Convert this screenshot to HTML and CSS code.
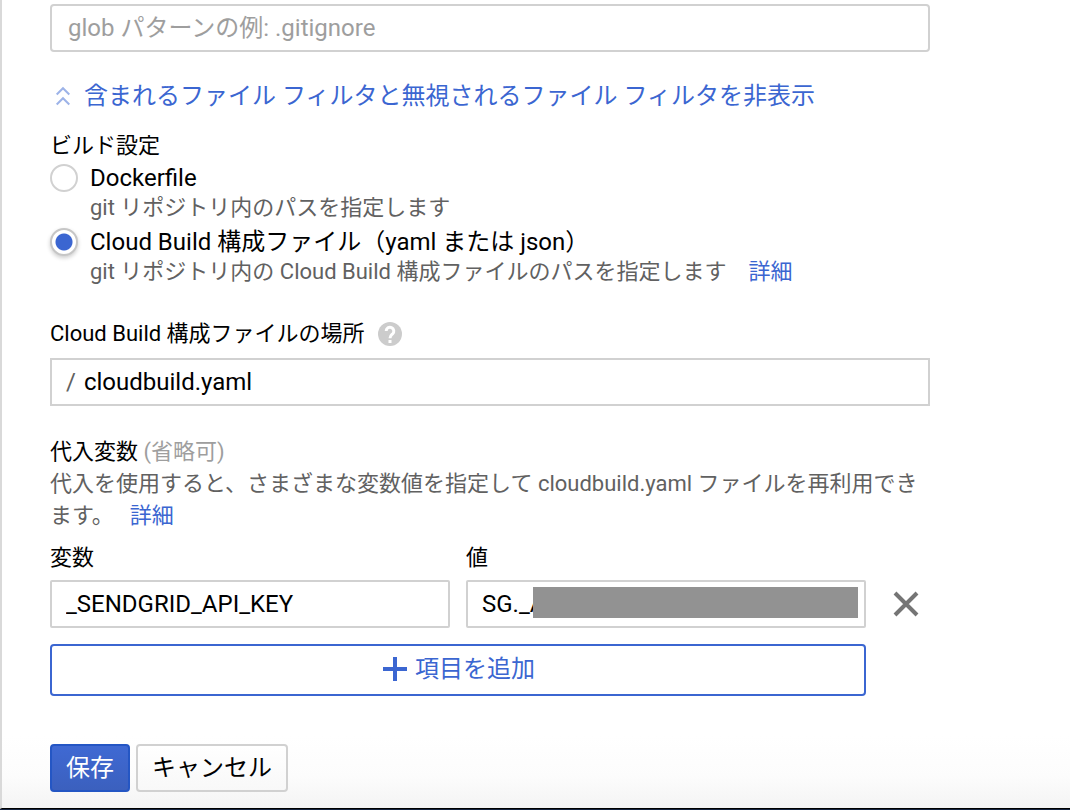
FILE: index.html
```html
<!DOCTYPE html>
<html lang="ja">
<head>
<meta charset="UTF-8">
<meta name="viewport" content="width=device-width, initial-scale=1.0">
<title>トリガーの編集</title>
<link rel="stylesheet" href="styles.css">
</head>
<body>
<main class="panel">
    <form class="form">
        <input class="text-input rounded" type="text" aria-label="無視されるファイル フィルタ" placeholder="glob パターンの例: .gitignore">

        <a class="toggle" href="#">
            <svg class="toggle-icon" viewBox="0 0 16 20" aria-hidden="true">
                <path d="M1.700 8.500 8 2.200l6.300 6.300M1.700 18.500 8 12.200l6.300 6.300"/>
            </svg>
            含まれるファイル フィルタと無視されるファイル フィルタを非表示
        </a>

        <fieldset class="build">
            <legend class="label">ビルド設定</legend>
            <div class="option">
                <input class="radio" type="radio" name="build" id="dockerfile">
                <label class="option-label" for="dockerfile">Dockerfile</label>
                <p class="hint">git リポジトリ内のパスを指定します</p>
            </div>
            <div class="option">
                <input class="radio" type="radio" name="build" id="cloudbuild" checked>
                <label class="option-label" for="cloudbuild">Cloud Build 構成ファイル（yaml または json）</label>
                <p class="hint">git リポジトリ内の Cloud Build 構成ファイルのパスを指定します<a class="link" href="#">詳細</a></p>
            </div>
        </fieldset>

        <div class="location">
            <div class="label-row">
                <label class="label" for="path">Cloud Build 構成ファイルの場所</label>
                <svg class="help" viewBox="0 0 24 24" aria-hidden="true">
                    <circle cx="12" cy="12" r="12"/>
                    <path d="M8.200 9a3.800 3.800 0 1 1 6.400 2.800C13 13.200 12 13.800 12 16.300"/>
                    <rect x="10.500" y="18" width="3" height="3"/>
                </svg>
            </div>
            <div class="prefixed">
                <span class="prefix">/</span>
                <input class="bare-input" type="text" id="path" value="cloudbuild.yaml">
            </div>
        </div>

        <section class="substitutions">
            <h2 class="label">代入変数 <span class="optional">(省略可)</span></h2>
            <p class="description">代入を使用すると、さまざまな変数値を指定して cloudbuild.yaml ファイルを再利用できます。<a class="link" href="#">詳細</a></p>
            <div class="pairs">
                <div class="field">
                    <label class="label" for="key">変数</label>
                    <input class="text-input" type="text" id="key" value="_SENDGRID_API_KEY">
                </div>
                <div class="field">
                    <label class="label" for="value">値</label>
                    <div class="masked">
                        <input class="text-input" type="text" id="value" value="SG._A">
                        <span class="mask"></span>
                    </div>
                </div>
                <button class="remove" type="button" aria-label="削除">
                    <svg class="remove-icon" viewBox="0 0 28 28" aria-hidden="true">
                        <path d="M3 3l22 22M25 3L3 25"/>
                    </svg>
                </button>
                <button class="add" type="button">
                    <svg class="add-icon" viewBox="0 0 24 24" aria-hidden="true">
                        <path d="M12 0v24M0 12h24"/>
                    </svg>
                    項目を追加
                </button>
            </div>
        </section>

        <div class="actions">
            <button class="button primary" type="submit">保存</button>
            <button class="button" type="button">キャンセル</button>
        </div>
    </form>
</main>
</body>
</html>
```
FILE: styles.css
```css
* {
    box-sizing: border-box;
}

body {
    margin: 0;
    background-color: #14233f;
    color: #000;
    font-family: Roboto, "Noto Sans CJK JP", sans-serif;
    font-size: 24px;
    line-height: 32px;
}

input,
button {
    font: inherit;
    color: inherit;
}

h2,
p {
    margin: 0;
}

a {
    color: #3b66d1;
    text-decoration: none;
}

.panel {
    min-height: calc(100vh - 1px);
    padding: 4px 16px 16px 48px;
    border-left: 2px solid #d9d9d9;
    border-bottom: 1px solid #000;
    background: linear-gradient(to top, #f4f4f4, #fcfcfc 32px, #fff 72px);
}

.form {
    max-width: 880px;
}

.text-input {
    display: block;
    width: 100%;
    height: 48px;
    padding: 0 14px;
    border: 2px solid #d1d1d1;
    border-radius: 2px;
    background-color: #fff;
}

.text-input.rounded {
    padding: 0 16px;
    border-radius: 4px;
}

.text-input::placeholder {
    color: #9e9e9e;
    opacity: 1;
}

.toggle {
    display: flex;
    align-items: center;
    gap: 13px;
    margin-top: 28px;
    padding-left: 5px;
}

.toggle-icon {
    width: 16px;
    height: 20px;
    fill: none;
    stroke: #9db3e8;
    stroke-width: 2;
}

.label {
    padding: 0;
    font-size: 22px;
    font-weight: 400;
    line-height: 32px;
}

.build {
    margin: 18px 0 0;
    padding: 0;
    border: 0;
}

.option {
    display: grid;
    grid-template-columns: 28px 1fr;
    column-gap: 12px;
    align-items: center;
    margin-bottom: 4px;
}

.radio {
    appearance: none;
    width: 28px;
    height: 28px;
    margin: 0;
    border: 2px solid #d1d1d1;
    border-radius: 50%;
    background-color: #fff;
}

.radio:checked {
    background-image: radial-gradient(circle, #3b66d1 8px, transparent 9px);
    border-color: #c6c6c6;
    box-shadow: 0 2px 4px rgba(0, 0, 0, 0.2);
}

.hint {
    grid-column: 2;
    color: #616161;
    font-size: 22px;
    line-height: 28px;
}

.link {
    margin-left: 22px;
}

.location {
    margin-top: 28px;
}

.label-row {
    display: flex;
    align-items: center;
    gap: 13px;
    margin-bottom: 8px;
}

.help {
    width: 24px;
    height: 24px;
    fill: #ccc;
}

.help path {
    fill: none;
    stroke: #fff;
    stroke-width: 3;
}

.help rect {
    fill: #fff;
}

.prefixed {
    display: flex;
    align-items: center;
    gap: 8px;
    height: 48px;
    padding: 0 14px;
    border: 2px solid #d1d1d1;
    background-color: #fff;
}

.prefix {
    color: #616161;
}

.bare-input {
    flex: 1;
    min-width: 0;
    padding: 0;
    border: 0;
    background: none;
}

.substitutions {
    margin-top: 30px;
}

.optional {
    color: #9e9e9e;
}

.description {
    color: #616161;
    font-size: 22px;
}

.description .link {
    margin-left: 16px;
}

.pairs {
    display: grid;
    grid-template-columns: 1fr 1fr 48px;
    gap: 16px;
    margin-top: 10px;
}

.field {
    display: flex;
    flex-direction: column;
    gap: 6px;
}

.masked {
    position: relative;
}

/* Bar over the secret part of the value */
.mask {
    position: absolute;
    top: 7px;
    right: 8px;
    bottom: 10px;
    left: 67px;
    background-color: #929292;
}

.remove {
    display: flex;
    align-items: center;
    justify-content: center;
    align-self: end;
    height: 48px;
    padding: 0;
    border: 0;
    background: none;
    cursor: pointer;
}

.remove-icon {
    width: 28px;
    height: 28px;
    stroke: #757575;
    stroke-width: 4;
}

.add {
    display: flex;
    align-items: center;
    justify-content: center;
    gap: 8px;
    grid-column: 1 / 3;
    height: 52px;
    padding: 0 0 2px 2px;
    border: 2px solid #3b66d1;
    border-radius: 4px;
    background-color: #fff;
    color: #3b66d1;
    cursor: pointer;
}

.add-icon {
    width: 24px;
    height: 24px;
    stroke: #3b66d1;
    stroke-width: 4;
}

.actions {
    display: flex;
    gap: 6px;
    margin-top: 48px;
}

.button {
    height: 48px;
    padding: 0 14px;
    border: 2px solid #d1d1d1;
    border-radius: 4px;
    background: linear-gradient(#fff, #f8f8f8);
    cursor: pointer;
}

.button.primary {
    border-color: #2456c4;
    background: linear-gradient(#3f69d3, #3b60be);
    color: #fff;
}
```
